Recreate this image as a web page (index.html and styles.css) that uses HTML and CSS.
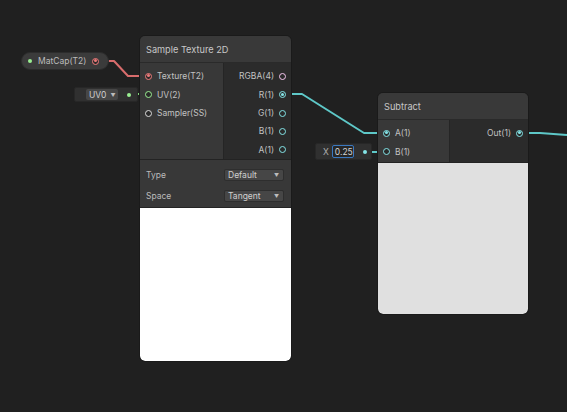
FILE: index.html
```html
<!DOCTYPE html>
<html>
<head>
<meta charset="utf-8">
<link rel="stylesheet" href="styles.css">
</head>
<body>
<div class="canvas">
  <svg class="wires" width="567" height="412" viewBox="0 0 567 412">
    <polyline points="108,61 114,61 128,76 148,76" class="w pink"/>
    <line x1="128" y1="94" x2="148" y2="94" class="w green"/>
    <polyline points="283,94 302,94 364,133 386,133" class="w cyan"/>
    <line x1="366" y1="152" x2="386" y2="152" class="w cyan"/>
    <polyline points="518,133 540,133 567,135" class="w cyan"/>
  </svg>

  <div class="prop-node">
    <span class="dot green-fill"></span>
    <span class="prop-label">MatCap(T2)</span>
    <span class="port pink-port connected"></span>
  </div>

  <div class="inline-field uv-field">
    <span class="mini-drop"><span>UV0</span><span class="caret">▼</span></span>
    <span class="dot green-fill"></span>
  </div>

  <div class="inline-field x-field">
    <span class="x-label">X</span>
    <span class="num-input">0.25</span>
    <span class="dot cyan-fill"></span>
  </div>

  <div class="node sample">
    <div class="header">Sample Texture 2D</div>
    <div class="ports">
      <div class="inputs">
        <div class="row"><span class="port pink-port connected"></span><span>Texture(T2)</span></div>
        <div class="row"><span class="port green-port"></span><span>UV(2)</span></div>
        <div class="row"><span class="port white-port"></span><span>Sampler(SS)</span></div>
      </div>
      <div class="outputs">
        <div class="row"><span>RGBA(4)</span><span class="port lilac-port"></span></div>
        <div class="row"><span>R(1)</span><span class="port cyan-port connected"></span></div>
        <div class="row"><span>G(1)</span><span class="port cyan-port"></span></div>
        <div class="row"><span>B(1)</span><span class="port cyan-port"></span></div>
        <div class="row"><span>A(1)</span><span class="port cyan-port"></span></div>
      </div>
    </div>
    <div class="settings">
      <div class="setting"><span>Type</span><span class="drop">Default <span class="caret">▼</span></span></div>
      <div class="setting"><span>Space</span><span class="drop">Tangent <span class="caret">▼</span></span></div>
    </div>
    <div class="preview white"></div>
  </div>

  <div class="node subtract">
    <div class="header">Subtract</div>
    <div class="ports">
      <div class="inputs">
        <div class="row"><span class="port cyan-port connected"></span><span>A(1)</span></div>
        <div class="row"><span class="port cyan-port"></span><span>B(1)</span></div>
      </div>
      <div class="outputs">
        <div class="row"><span>Out(1)</span><span class="port cyan-port connected"></span></div>
      </div>
    </div>
    <div class="preview grey"></div>
  </div>
</div>
</body>
</html>
```

FILE: styles.css
```css
* { box-sizing: border-box; }
html, body {
  margin: 0;
  padding: 0;
  background: #202020;
  overflow: hidden;
}
.canvas {
  position: relative;
  width: 567px;
  height: 412px;
  background: #202020;
  font-family: Inter, "Noto Sans", "Liberation Sans", sans-serif;
  font-size: 8.5px;
  color: #c2c2c2;
}
.wires {
  position: absolute;
  left: 0;
  top: 0;
}
.w { fill: none; stroke-width: 2; stroke-linejoin: round; }
.pink { stroke: #d86c6c; }
.green { stroke: #7fd27a; }
.cyan { stroke: #5ec8c8; }

/* ports */
.port {
  width: 7px;
  height: 7px;
  border-radius: 50%;
  border: 1.5px solid currentColor;
  background: #2a2a2a;
  flex: none;
  position: relative;
}
.port.connected::after {
  content: "";
  position: absolute;
  left: 0.5px;
  top: 0.5px;
  width: 3px;
  height: 3px;
  border-radius: 50%;
  background: currentColor;
}
.pink-port { color: #ee7b7b; }
.green-port { color: #9aef92; }
.white-port { color: #dcdcdc; }
.lilac-port { color: #f4c5ee; }
.cyan-port { color: #84e4e7; }

.dot {
  width: 4px;
  height: 4px;
  border-radius: 50%;
  flex: none;
}
.green-fill { background: #9aef92; }
.cyan-fill { background: #84e4e7; }

/* property node */
.prop-node {
  position: absolute;
  left: 21px;
  top: 52px;
  width: 88px;
  height: 18px;
  border-radius: 9px;
  background: #3b3b3b;
  border: 1px solid #2c2c2c;
  display: flex;
  align-items: center;
  padding: 0 11px 0 6px;
  gap: 6px;
}
.prop-label { flex: 1; color: #bdbdbd; }

/* inline fields */
.inline-field {
  position: absolute;
  display: flex;
  align-items: center;
  background: #303030;
  border: 1px solid #272727;
  border-radius: 2px;
}
.uv-field {
  left: 74px;
  top: 87px;
  width: 64px;
  height: 15px;
  padding: 0 0 0 11px;
  gap: 9px;
}
.mini-drop {
  width: 32px;
  display: flex;
  align-items: center;
  gap: 4px;
  height: 11px;
  padding: 0 0 0 3px;
  background: #474747;
  border-radius: 2px;
  color: #cfcfcf;
  font-size: 8.5px;
}
.caret { font-size: 5px; color: #bdbdbd; }
.x-field {
  left: 315px;
  top: 143px;
  width: 57px;
  height: 17px;
  padding: 0 5px 0 7px;
  gap: 3px;
}
.x-label { color: #b0b0b0; width: 6px; }
.num-input {
  width: 25px;
  height: 13px;
  border: 1px solid #3a78c0;
  border-radius: 2px;
  background: #262626;
  color: #d4d4d4;
  display: flex;
  align-items: center;
  padding-left: 2px;
  font-size: 8.5px;
  margin-right: 6px;
}

/* nodes */
.node {
  position: absolute;
  border: 1px solid #1a1a1a;
  border-radius: 6px;
  background: #2a2a2a;
  display: flex;
  flex-direction: column;
  overflow: hidden;
}
.sample { left: 139px; top: 35px; width: 153px; }
.subtract { left: 377px; top: 92px; width: 152px; }
.header {
  height: 27px;
  background: #393939;
  border-bottom: 1px solid #2a2a2a;
  display: flex;
  align-items: center;
  padding-left: 6px;
  font-size: 9.2px;
  color: #c8c8c8;
}
.ports {
  display: flex;
  border-bottom: 1px solid #232323;
}
.inputs {
  background: #383838;
  padding-top: 4px;
  display: flex;
  flex-direction: column;
}
.outputs {
  flex: 1;
  background: #2b2b2b;
  padding-top: 4px;
  border-left: 1px solid #252525;
  display: flex;
  flex-direction: column;
}
.row {
  height: 18.5px;
  display: flex;
  align-items: center;
  gap: 5px;
}
.inputs .row { padding-left: 5px; }
.outputs .row { justify-content: flex-end; padding-right: 5px; gap: 5px; }

.sample .inputs { width: 83px; }
.sample .ports { height: 97px; }
.subtract .inputs { width: 71px; }
.subtract .ports { height: 43px; }

.settings {
  background: #383838;
  height: 48px;
  padding: 9px 7px 0 6px;
  display: flex;
  flex-direction: column;
  gap: 9px;
  border-bottom: 1px solid #242424;
}
.setting {
  height: 12px;
  display: flex;
  align-items: center;
  justify-content: space-between;
  color: #bbbbbb;
}
.drop {
  width: 60px;
  height: 12px;
  background: #464646;
  border: 1px solid #2e2e2e;
  border-radius: 2px;
  display: flex;
  align-items: center;
  justify-content: space-between;
  padding: 0 4px 0 3px;
  color: #cfcfcf;
}
.preview {
  border-radius: 0 0 5px 5px;
}
.preview.white { background: #ffffff; height: 153px; }
.preview.grey { background: #e0e0e0; height: 151px; }
```
